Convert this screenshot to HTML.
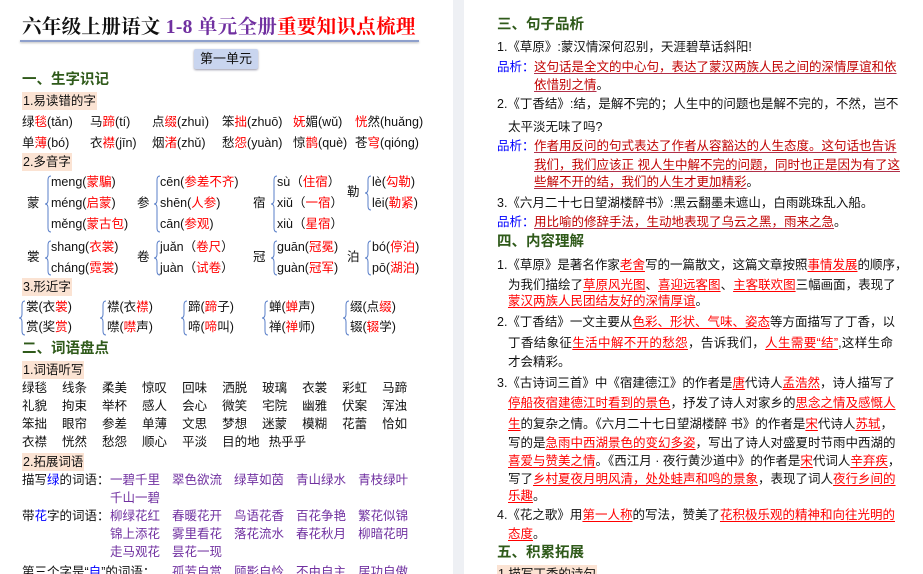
<!DOCTYPE html>
<html><head><meta charset="utf-8">
<style>
*{margin:0;padding:0;box-sizing:border-box}
html,body{width:923px;height:574px;overflow:hidden;background:#fff}
body{position:relative;font-family:"Liberation Sans","Noto Sans CJK SC",sans-serif;font-size:12.5px;color:#111}
.a{position:absolute;white-space:nowrap;line-height:16px;height:16px}
.r{color:#f00}.p{color:#7030a0}.b{color:#00f}
.h{position:absolute;font-weight:bold;color:#2f5a1a;font-size:14.5px;line-height:18px;white-space:nowrap}
.box{position:absolute;background:#fbe3d3;line-height:18px;height:18px;padding:0 1px;white-space:nowrap}
.j{position:absolute;line-height:16px;height:16px;text-align:justify;text-align-last:justify;white-space:nowrap;overflow:visible}
.u{color:#c00000;text-decoration:underline;text-decoration-color:#b0304a;text-underline-offset:2px}
.ur{color:#f00;text-decoration:underline;text-decoration-color:#f00;text-underline-offset:2px}
.gut{position:absolute;left:453px;top:0;width:11px;height:574px;background:#eef0f4}
svg.br{position:absolute}
</style></head><body>
<div class="gut"></div>

<!-- LEFT PAGE -->
<div class="a" style="left:22px;top:16px;height:24px;line-height:24px;font-size:19.5px;font-weight:bold;font-family:'Liberation Serif','Noto Serif CJK SC',serif;letter-spacing:0.3px">六年级上册语文 <span style="color:#7030a0">1-8 单元全册</span><span class="r">重要知识点梳理</span></div>
<div style="position:absolute;left:20px;top:40px;width:399px;height:2px;background:#8ea0cc;box-shadow:0 1px 2px #bbb"></div>
<div style="position:absolute;left:194px;top:49px;width:64px;height:20px;background:#c9d5ef;border-radius:2px;box-shadow:0 1px 2px #99a;text-align:center;line-height:20px;font-size:13px">第一单元</div>

<div class="h" style="left:22px;top:71px">一、生字识记</div>
<div class="box" style="left:22px;top:92px">1.易读错的字</div>
<div class="a" style="left:22px;top:114px">绿<span class="r">毯</span>(tǎn)</div>
<div class="a" style="left:90px;top:114px">马<span class="r">蹄</span>(tí)</div>
<div class="a" style="left:152px;top:114px">点<span class="r">缀</span>(zhuì)</div>
<div class="a" style="left:222px;top:114px">笨<span class="r">拙</span>(zhuō)</div>
<div class="a" style="left:293px;top:114px"><span class="r">妩</span>媚(wǔ)</div>
<div class="a" style="left:355px;top:114px"><span class="r">恍</span>然(huǎng)</div>
<div class="a" style="left:22px;top:135px">单<span class="r">薄</span>(bó)</div>
<div class="a" style="left:90px;top:135px">衣<span class="r">襟</span>(jīn)</div>
<div class="a" style="left:152px;top:135px">烟<span class="r">渚</span>(zhǔ)</div>
<div class="a" style="left:222px;top:135px">愁<span class="r">怨</span>(yuàn)</div>
<div class="a" style="left:293px;top:135px">惊<span class="r">鹊</span>(què)</div>
<div class="a" style="left:355px;top:135px">苍<span class="r">穹</span>(qióng)</div>
<div class="box" style="left:22px;top:153px">2.多音字</div>

<svg class="br" style="left:44px;top:175px" width="8" height="58"><path d="M7 1Q4 1 4 5L4 25Q4 29 1 29Q4 29 4 33L4 53Q4 57 7 57" fill="none" stroke="#5a7fc8" stroke-width="1"/></svg>
<svg class="br" style="left:153px;top:175px" width="8" height="58"><path d="M7 1Q4 1 4 5L4 25Q4 29 1 29Q4 29 4 33L4 53Q4 57 7 57" fill="none" stroke="#5a7fc8" stroke-width="1"/></svg>
<svg class="br" style="left:270px;top:175px" width="8" height="58"><path d="M7 1Q4 1 4 5L4 25Q4 29 1 29Q4 29 4 33L4 53Q4 57 7 57" fill="none" stroke="#5a7fc8" stroke-width="1"/></svg>
<svg class="br" style="left:364px;top:175px" width="8" height="36"><path d="M7 1Q4 1 4 5L4 14Q4 18 1 18Q4 18 4 22L4 31Q4 35 7 35" fill="none" stroke="#5a7fc8" stroke-width="1"/></svg>
<div class="a" style="left:27px;top:195px">蒙</div>
<div class="a" style="left:51px;top:174px">meng(<span class="r">蒙騙</span>)</div>
<div class="a" style="left:51px;top:195px">méng(<span class="r">启蒙</span>)</div>
<div class="a" style="left:51px;top:216px">měng(<span class="r">蒙古包</span>)</div>
<div class="a" style="left:137px;top:195px">参</div>
<div class="a" style="left:160px;top:174px">cēn(<span class="r">参差不齐</span>)</div>
<div class="a" style="left:160px;top:195px">shēn(<span class="r">人参</span>)</div>
<div class="a" style="left:160px;top:216px">cān(<span class="r">参观</span>)</div>
<div class="a" style="left:253px;top:195px">宿</div>
<div class="a" style="left:277px;top:174px">sù（<span class="r">住宿</span>）</div>
<div class="a" style="left:277px;top:195px">xiǔ（<span class="r">一宿</span>）</div>
<div class="a" style="left:277px;top:216px">xiù（<span class="r">星宿</span>）</div>
<div class="a" style="left:347px;top:184px">勒</div>
<div class="a" style="left:372px;top:174px">lè(<span class="r">勾勒</span>)</div>
<div class="a" style="left:372px;top:195px">lēi(<span class="r">勒紧</span>)</div>
<svg class="br" style="left:44px;top:240px" width="8" height="36"><path d="M7 1Q4 1 4 5L4 14Q4 18 1 18Q4 18 4 22L4 31Q4 35 7 35" fill="none" stroke="#5a7fc8" stroke-width="1"/></svg>
<svg class="br" style="left:153px;top:240px" width="8" height="36"><path d="M7 1Q4 1 4 5L4 14Q4 18 1 18Q4 18 4 22L4 31Q4 35 7 35" fill="none" stroke="#5a7fc8" stroke-width="1"/></svg>
<svg class="br" style="left:270px;top:240px" width="8" height="36"><path d="M7 1Q4 1 4 5L4 14Q4 18 1 18Q4 18 4 22L4 31Q4 35 7 35" fill="none" stroke="#5a7fc8" stroke-width="1"/></svg>
<svg class="br" style="left:364px;top:240px" width="8" height="36"><path d="M7 1Q4 1 4 5L4 14Q4 18 1 18Q4 18 4 22L4 31Q4 35 7 35" fill="none" stroke="#5a7fc8" stroke-width="1"/></svg>
<div class="a" style="left:27px;top:249px">裳</div>
<div class="a" style="left:51px;top:239px">shang(<span class="r">衣裳</span>)</div>
<div class="a" style="left:51px;top:260px">cháng(<span class="r">霓裳</span>)</div>
<div class="a" style="left:137px;top:249px">卷</div>
<div class="a" style="left:160px;top:239px">juǎn（<span class="r">卷尺</span>）</div>
<div class="a" style="left:160px;top:260px">juàn（<span class="r">试卷</span>）</div>
<div class="a" style="left:253px;top:249px">冠</div>
<div class="a" style="left:277px;top:239px">guān(<span class="r">冠冕</span>)</div>
<div class="a" style="left:277px;top:260px">guàn(<span class="r">冠军</span>)</div>
<div class="a" style="left:347px;top:249px">泊</div>
<div class="a" style="left:372px;top:239px">bó(<span class="r">停泊</span>)</div>
<div class="a" style="left:372px;top:260px">pō(<span class="r">湖泊</span>)</div>

<div class="box" style="left:22px;top:278px">3.形近字</div>
<svg class="br" style="left:18px;top:300px" width="8" height="36"><path d="M7 1Q4 1 4 5L4 14Q4 18 1 18Q4 18 4 22L4 31Q4 35 7 35" fill="none" stroke="#5a7fc8" stroke-width="1"/></svg>
<svg class="br" style="left:99px;top:300px" width="8" height="36"><path d="M7 1Q4 1 4 5L4 14Q4 18 1 18Q4 18 4 22L4 31Q4 35 7 35" fill="none" stroke="#5a7fc8" stroke-width="1"/></svg>
<svg class="br" style="left:180px;top:300px" width="8" height="36"><path d="M7 1Q4 1 4 5L4 14Q4 18 1 18Q4 18 4 22L4 31Q4 35 7 35" fill="none" stroke="#5a7fc8" stroke-width="1"/></svg>
<svg class="br" style="left:261px;top:300px" width="8" height="36"><path d="M7 1Q4 1 4 5L4 14Q4 18 1 18Q4 18 4 22L4 31Q4 35 7 35" fill="none" stroke="#5a7fc8" stroke-width="1"/></svg>
<svg class="br" style="left:342px;top:300px" width="8" height="36"><path d="M7 1Q4 1 4 5L4 14Q4 18 1 18Q4 18 4 22L4 31Q4 35 7 35" fill="none" stroke="#5a7fc8" stroke-width="1"/></svg>
<div class="a" style="left:26px;top:299px">裳(衣<span class="r">裳</span>)</div>
<div class="a" style="left:26px;top:319px">赏(奖<span class="r">赏</span>)</div>
<div class="a" style="left:107px;top:299px">襟(衣<span class="r">襟</span>)</div>
<div class="a" style="left:107px;top:319px">噤(<span class="r">噤</span>声)</div>
<div class="a" style="left:188px;top:299px">蹄(<span class="r">蹄</span>子)</div>
<div class="a" style="left:188px;top:319px">啼(<span class="r">啼</span>叫)</div>
<div class="a" style="left:269px;top:299px">蝉(<span class="r">蝉</span>声)</div>
<div class="a" style="left:269px;top:319px">禅(<span class="r">禅</span>师)</div>
<div class="a" style="left:350px;top:299px">缀(点<span class="r">缀</span>)</div>
<div class="a" style="left:350px;top:319px">辍(<span class="r">辍</span>学)</div>

<div class="h" style="left:22px;top:340px">二、词语盘点</div>
<div class="box" style="left:22px;top:361px">1.词语听写</div>
<div class="a" style="left:22px;top:380px">绿毯<span style="margin-left:15px">线条</span><span style="margin-left:15px">柔美</span><span style="margin-left:15px">惊叹</span><span style="margin-left:15px">回味</span><span style="margin-left:15px">洒脱</span><span style="margin-left:15px">玻璃</span><span style="margin-left:15px">衣裳</span><span style="margin-left:15px">彩虹</span><span style="margin-left:15px">马蹄</span></div>
<div class="a" style="left:22px;top:398px">礼貌<span style="margin-left:15px">拘束</span><span style="margin-left:15px">举杯</span><span style="margin-left:15px">感人</span><span style="margin-left:15px">会心</span><span style="margin-left:15px">微笑</span><span style="margin-left:15px">宅院</span><span style="margin-left:15px">幽雅</span><span style="margin-left:15px">伏案</span><span style="margin-left:15px">浑浊</span></div>
<div class="a" style="left:22px;top:416px">笨拙<span style="margin-left:15px">眼帘</span><span style="margin-left:15px">参差</span><span style="margin-left:15px">单薄</span><span style="margin-left:15px">文思</span><span style="margin-left:15px">梦想</span><span style="margin-left:15px">迷蒙</span><span style="margin-left:15px">模糊</span><span style="margin-left:15px">花蕾</span><span style="margin-left:15px">恰如</span></div>
<div class="a" style="left:22px;top:434px">衣襟<span style="margin-left:15px">恍然</span><span style="margin-left:15px">愁怨</span><span style="margin-left:15px">顺心</span><span style="margin-left:15px">平淡</span><span style="margin-left:15px">目的地</span><span style="margin-left:9px">热乎乎</span></div>
<div class="box" style="left:22px;top:453px">2.拓展词语</div>
<div class="a" style="left:22px;top:472px">描写<span class="b">绿</span>的词语：</div>
<div class="a p" style="left:110px;top:472px">一碧千里<span style="margin-left:12px">翠色欲流</span><span style="margin-left:12px">绿草如茵</span><span style="margin-left:12px">青山绿水</span><span style="margin-left:12px">青枝绿叶</span></div>
<div class="a p" style="left:110px;top:490px">千山一碧</div>
<div class="a" style="left:22px;top:508px">带<span class="b">花</span>字的词语：</div>
<div class="a p" style="left:110px;top:508px">柳绿花红<span style="margin-left:12px">春暖花开</span><span style="margin-left:12px">鸟语花香</span><span style="margin-left:12px">百花争艳</span><span style="margin-left:12px">繁花似锦</span></div>
<div class="a p" style="left:110px;top:526px">锦上添花<span style="margin-left:12px">雾里看花</span><span style="margin-left:12px">落花流水</span><span style="margin-left:12px">春花秋月</span><span style="margin-left:12px">柳暗花明</span></div>
<div class="a p" style="left:110px;top:544px">走马观花<span style="margin-left:12px">昙花一现</span></div>
<div class="a" style="left:22px;top:564px">第三个字是“<span class="b">自</span>”的词语：</div>
<div class="a p" style="left:172px;top:564px">孤芳自赏<span style="margin-left:12px">顾影自怜</span><span style="margin-left:12px">不由自主</span><span style="margin-left:12px">居功自傲</span></div>

<!-- RIGHT PAGE -->
<div class="h" style="left:497px;top:16px">三、句子品析</div>
<div class="a" style="left:497px;top:39px">1.《草原》:蒙汉情深何忍别，天涯碧草话斜阳!</div>
<div class="a b" style="left:497px;top:59px">品析：</div>
<div class="j" style="left:534px;top:59px;width:361px"><span class="u">这句话是全文的中心句，表达了蒙汉两族人民之间的深情厚谊和依</span></div>
<div class="a" style="left:534px;top:77px"><span class="u">依惜别之情</span>。</div>
<div class="j" style="left:497px;top:96px;width:398px">2.《丁香结》:结，是解不完的；人生中的问题也是解不完的，不然，岂不</div>
<div class="a" style="left:508px;top:119px">太平淡无味了吗?</div>
<div class="a b" style="left:497px;top:138px">品析：</div>
<div class="j" style="left:534px;top:138px;width:361px"><span class="u">作者用反问的句式表达了作者从容豁达的人生态度。这句话也告诉</span></div>
<div class="j" style="left:534px;top:157px;width:361px"><span class="u">我们，我们应该正 视人生中解不完的问题，同时也正是因为有了这</span></div>
<div class="a" style="left:534px;top:174px"><span class="u">些解不开的结，我们的人生才更加精彩</span>。</div>
<div class="a" style="left:497px;top:195px">3.《六月二十七日望湖楼醉书》:黑云翻墨未遮山，白雨跳珠乱入船。</div>
<div class="a b" style="left:497px;top:214px">品析：</div>
<div class="a" style="left:534px;top:214px"><span class="u">用比喻的修辞手法，生动地表现了乌云之黑，雨来之急</span>。</div>
<div class="h" style="left:497px;top:233px">四、内容理解</div>
<div class="j" style="left:497px;top:257px;width:396px">1.《草原》是著名作家<span class="ur">老舍</span>写的一篇散文，这篇文章按照<span class="ur">事情发展</span>的顺序，</div>
<div class="j" style="left:508px;top:277px;width:385px">为我们描绘了<span class="ur">草原风光图</span>、<span class="ur">喜迎远客图</span>、<span class="ur">主客联欢图</span>三幅画面，表现了</div>
<div class="a" style="left:508px;top:293px"><span class="ur">蒙汉两族人民团结友好的深情厚谊</span>。</div>
<div class="j" style="left:497px;top:314px;width:396px">2.《丁香结》一文主要从<span class="ur">色彩、形状、气味、姿态</span>等方面描写了丁香，以</div>
<div class="j" style="left:508px;top:335px;width:385px">丁香结象征<span class="ur">生活中解不开的愁怨</span>，告诉我们，<span class="ur">人生需要“结”</span>,这样生命</div>
<div class="a" style="left:508px;top:354px">才会精彩。</div>
<div class="j" style="left:497px;top:375px;width:396px">3.《古诗词三首》中《宿建德江》的作者是<span class="ur">唐</span>代诗人<span class="ur">孟浩然</span>，诗人描写了</div>
<div class="j" style="left:508px;top:395px;width:385px"><span class="ur">停船夜宿建德江时看到的景色</span>，抒发了诗人对家乡的<span class="ur">思念之情及感慨人</span></div>
<div class="j" style="left:508px;top:416px;width:385px"><span class="ur">生</span>的复杂之情。《六月二十七日望湖楼醉 书》的作者是<span class="ur">宋</span>代诗人<span class="ur">苏轼</span>，</div>
<div class="j" style="left:508px;top:435px;width:385px">写的是<span class="ur">急雨中西湖景色的变幻多姿</span>，写出了诗人对盛夏时节雨中西湖的</div>
<div class="j" style="left:508px;top:453px;width:385px"><span class="ur">喜爱与赞美之情</span>。《西江月 · 夜行黄沙道中》的作者是<span class="ur">宋</span>代词人<span class="ur">辛弃疾</span>，</div>
<div class="j" style="left:508px;top:471px;width:385px">写了<span class="ur">乡村夏夜月明风清，处处蛙声和鸣的景象</span>，表现了词人<span class="ur">夜行乡间的</span></div>
<div class="a" style="left:508px;top:488px"><span class="ur">乐趣</span>。</div>
<div class="j" style="left:497px;top:507px;width:396px">4.《花之歌》用<span class="ur">第一人称</span>的写法，赞美了<span class="ur">花积极乐观的精神和向往光明的</span></div>
<div class="a" style="left:508px;top:526px"><span class="ur">态度</span>。</div>
<div class="h" style="left:497px;top:544px">五、积累拓展</div>
<div class="box" style="left:497px;top:565px">1.描写丁香的诗句</div>
</body></html>
